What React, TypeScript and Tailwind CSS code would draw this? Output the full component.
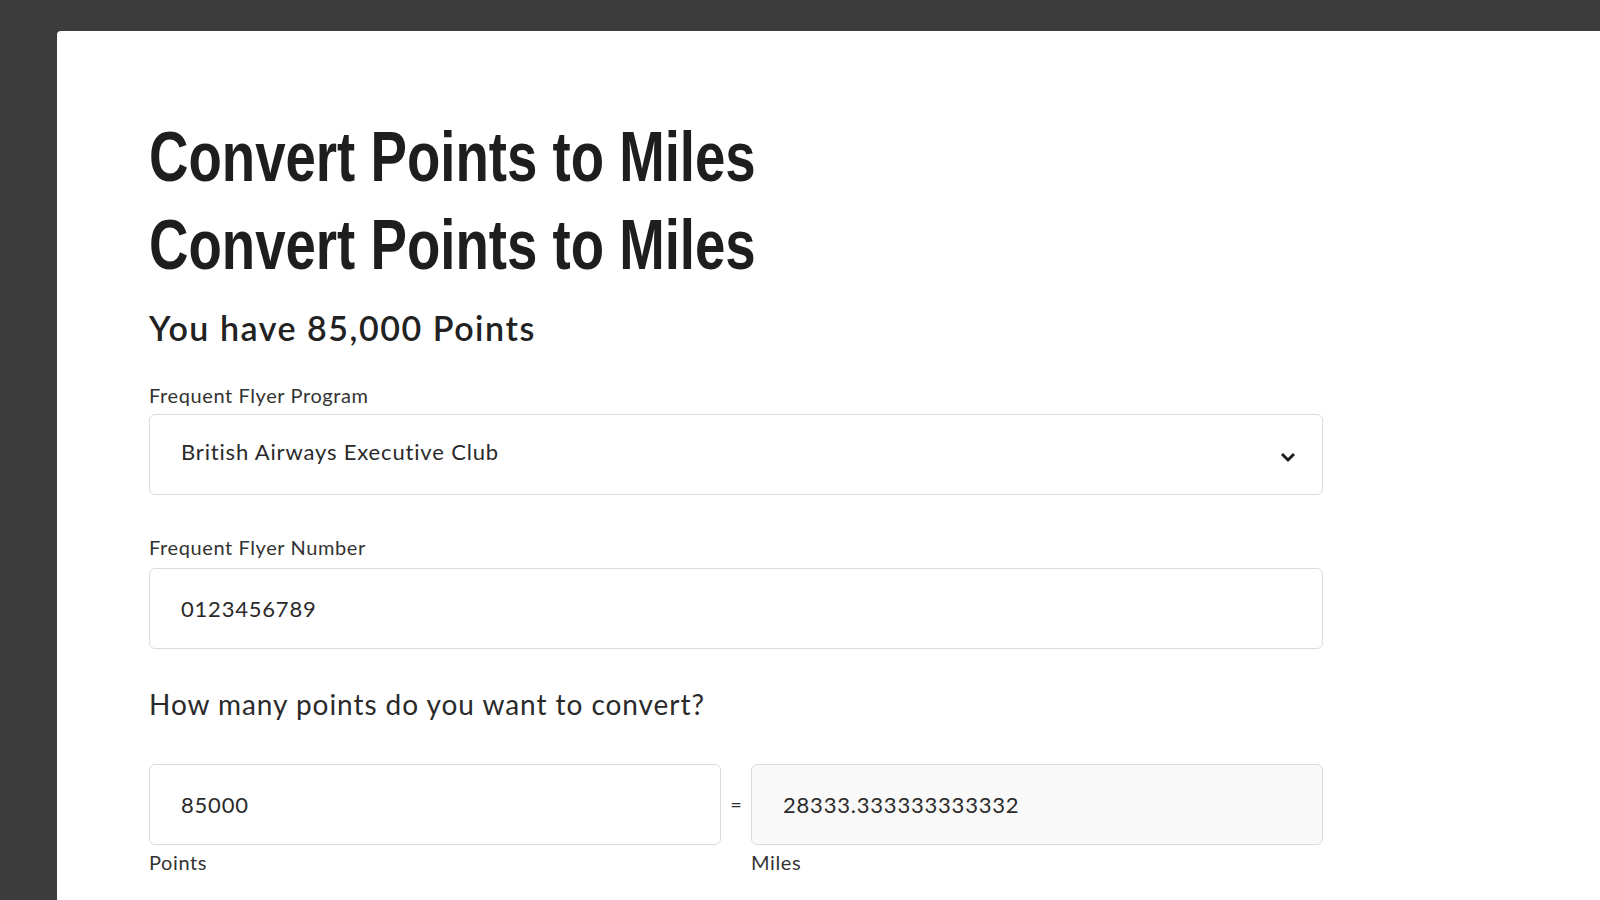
import React from "react";

const body = { fontFamily: "Lato, 'Open Sans', sans-serif" };
const heading = { fontFamily: "'Liberation Sans', Arial, sans-serif" };

export default function App() {
  return (
    <div className="h-[900px] w-[1600px] overflow-hidden bg-[#3c3c3c] pl-[57px] pt-[31px]">
      <div className="h-full rounded-tl-[4px] bg-white pl-[92px] pt-[82px] text-[#222]" style={body}>
        <div className="w-[1174px]">
          <h1
            className="origin-left scale-x-[0.78] whitespace-nowrap text-[70px] font-bold leading-[88px] text-[#1e1e1e]"
            style={heading}
          >
            Convert Points to Miles
          </h1>
          <h1
            className="origin-left scale-x-[0.78] whitespace-nowrap text-[70px] font-bold leading-[88px] text-[#1e1e1e]"
            style={heading}
          >
            Convert Points to Miles
          </h1>
          <p className="mt-[17px] text-[34px] font-semibold leading-[44px] tracking-[0.045em] text-[#222]">
            You have 85,000 Points
          </p>

          <label className="mt-[32px] block text-[20px] leading-[26px] tracking-[0.03em] text-[#333]">
            Frequent Flyer Program
          </label>
          <div className="mt-[6px] flex h-[81px] items-center justify-between rounded-[6px] border border-[#dcdcdc] bg-white pl-[31px] pr-[26px]">
            <span className="-mt-[6px] text-[22px] tracking-[0.038em] text-[#2a2a2a]">British Airways Executive Club</span>
            <svg width="16" height="12" viewBox="0 0 16 12" className="mt-[4px]">
              <polyline points="2,3 8,9 14,3" fill="none" stroke="#1e1e1e" strokeWidth="3" />
            </svg>
          </div>

          <label className="mt-[39px] block text-[20px] leading-[26px] tracking-[0.03em] text-[#333]">
            Frequent Flyer Number
          </label>
          <div className="mt-[8px] flex h-[81px] items-center rounded-[6px] border border-[#dcdcdc] bg-white pl-[31px]">
            <span className="text-[22px] tracking-[0.036em] text-[#2a2a2a]">0123456789</span>
          </div>

          <p className="mt-[37px] text-[28px] leading-[36px] tracking-[0.034em] text-[#2a2a2a]">
            How many points do you want to convert?
          </p>

          <div className="mt-[42px] flex items-start">
            <div className="w-[572px]">
              <div className="flex h-[81px] items-center rounded-[6px] border border-[#dcdcdc] bg-white pl-[31px]">
                <span className="text-[22px] tracking-[0.036em] text-[#2a2a2a]">85000</span>
              </div>
              <div className="mt-[4px] text-[20px] leading-[26px] tracking-[0.03em] text-[#333]">Points</div>
            </div>
            <div className="flex h-[81px] w-[30px] items-center justify-center">
              <span className="-mt-[2px] text-[20px] text-[#333]">=</span>
            </div>
            <div className="w-[572px]">
              <div className="flex h-[81px] items-center rounded-[6px] border border-[#dcdcdc] bg-[#f9f9f9] pl-[31px]">
                <span className="text-[22px] tracking-[0.036em] text-[#2a2a2a]">28333.333333333332</span>
              </div>
              <div className="mt-[4px] text-[20px] leading-[26px] tracking-[0.03em] text-[#333]">Miles</div>
            </div>
          </div>
        </div>
      </div>
    </div>
  );
}
